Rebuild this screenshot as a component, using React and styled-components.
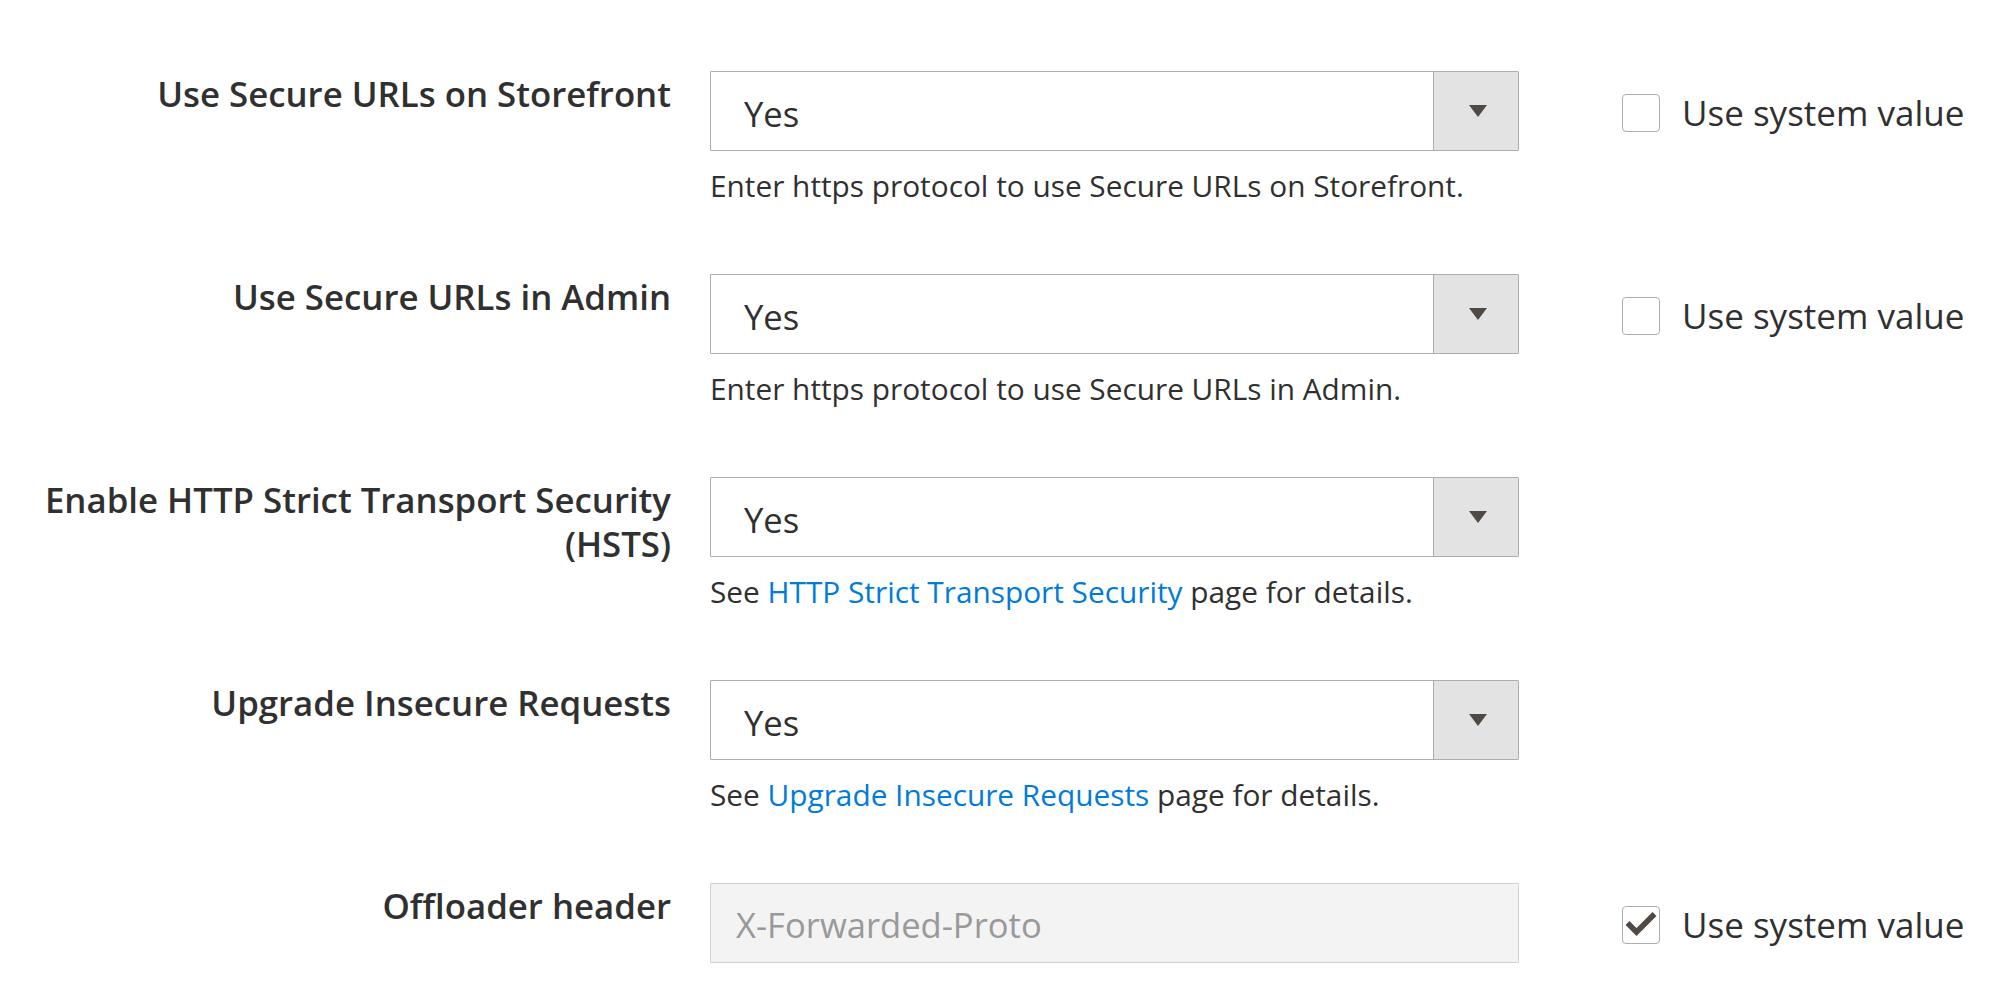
import styled, { createGlobalStyle } from 'styled-components';

const GlobalStyle = createGlobalStyle`
	html, body {
		margin: 0;
		padding: 0;
		background: #fff;
	}
	body {
		font-family: 'Open Sans', 'Noto Sans', sans-serif;
		color: #303030;
	}
`;

const rows = [
	{
		label: 'Use Secure URLs on Storefront',
		value: 'Yes',
		note: 'Enter https protocol to use Secure URLs on Storefront.',
		system: false,
	},
	{
		label: 'Use Secure URLs in Admin',
		value: 'Yes',
		note: 'Enter https protocol to use Secure URLs in Admin.',
		system: false,
	},
	{
		label: 'Enable HTTP Strict Transport Security (HSTS)',
		value: 'Yes',
		note: ['See ', 'HTTP Strict Transport Security', ' page for details.'],
	},
	{
		label: 'Upgrade Insecure Requests',
		value: 'Yes',
		note: ['See ', 'Upgrade Insecure Requests', ' page for details.'],
	},
	{
		label: 'Offloader header',
		value: 'X-Forwarded-Proto',
		disabled: true,
		system: true,
	},
];

export default function App () {
	return (
		<>
			<GlobalStyle />
			<Form>
				{rows.map(row => (
					<Row key={row.label}>
						<Label>{row.label}</Label>
						<Control>
							{row.disabled ? (
								<TextInput>{row.value}</TextInput>
							) : (
								<SelectBox>
									<SelectValue>{row.value}</SelectValue>
									<SelectToggle />
								</SelectBox>
							)}
							{row.note && (
								<Note>
									{Array.isArray(row.note) ? (
										<>
											{row.note[0]}
											<NoteLink href="#">{row.note[1]}</NoteLink>
											{row.note[2]}
										</>
									) : row.note}
								</Note>
							)}
						</Control>
						{row.system !== undefined && (
							<SystemValue>
								<CheckBox>
									{row.system && (
										<svg width="38" height="38" viewBox="0 0 38 38">
											<path d="M5.5 17 L14.5 26 L32.5 8" fill="none" stroke="#514943" strokeWidth="5.5" />
										</svg>
									)}
								</CheckBox>
								Use system value
							</SystemValue>
						)}
					</Row>
				))}
			</Form>
		</>
	);
}

const Form = styled.div`
	padding-top: 71px;
	display: flex;
	flex-direction: column;
	gap: 69px;
`;

const Row = styled.div`
	display: flex;
	align-items: flex-start;
`;

const Label = styled.div`
	width: 710px;
	flex-shrink: 0;
	box-sizing: border-box;
	padding: 1px 39px 0 20px;
	text-align: right;
	font-size: 34.8px;
	font-weight: 600;
	line-height: 43.5px;
	color: #303030;
`;

const Control = styled.div`
	width: 809px;
	flex-shrink: 0;
`;

const SelectBox = styled.div`
	display: flex;
	height: 80px;
	box-sizing: border-box;
	border: 1px solid #adadad;
	border-radius: 1px;
	background: #fff;
`;

const SelectValue = styled.div`
	flex: 1;
	display: flex;
	align-items: center;
	padding-left: 33px;
	padding-top: 4px;
	font-size: 34.6px;
	color: #303030;
`;

const SelectToggle = styled.div`
	width: 85px;
	box-sizing: border-box;
	border-left: 1px solid #adadad;
	background: #e3e3e3;
	display: flex;
	align-items: center;
	justify-content: center;
	padding-left: 4px;
	&::after {
		content: '';
		border-left: 9.5px solid transparent;
		border-right: 9.5px solid transparent;
		border-top: 12.5px solid #514943;
	}
`;

const TextInput = styled.div`
	height: 80px;
	box-sizing: border-box;
	display: flex;
	align-items: center;
	padding-left: 25px;
	padding-top: 2px;
	border: 1px solid #d1d1d1;
	border-radius: 1px;
	background: #f3f3f3;
	font-size: 34.6px;
	color: #999;
`;

const Note = styled.div`
	margin-top: 15px;
	font-size: 29.8px;
	line-height: 39px;
	color: #303030;
`;

const NoteLink = styled.a`
	color: #007bdb;
	text-decoration: none;
`;

const SystemValue = styled.label`
	margin-left: 103px;
	height: 80px;
	padding-top: 3px;
	box-sizing: border-box;
	display: flex;
	align-items: center;
	gap: 22px;
	font-size: 35px;
	color: #303030;
	white-space: nowrap;
`;

const CheckBox = styled.span`
	width: 38px;
	height: 38px;
	box-sizing: border-box;
	border: 1px solid #adadad;
	border-radius: 4px;
	background: #fff;
	display: flex;
	align-items: center;
	justify-content: center;
	svg {
		display: block;
		flex-shrink: 0;
	}
`;
